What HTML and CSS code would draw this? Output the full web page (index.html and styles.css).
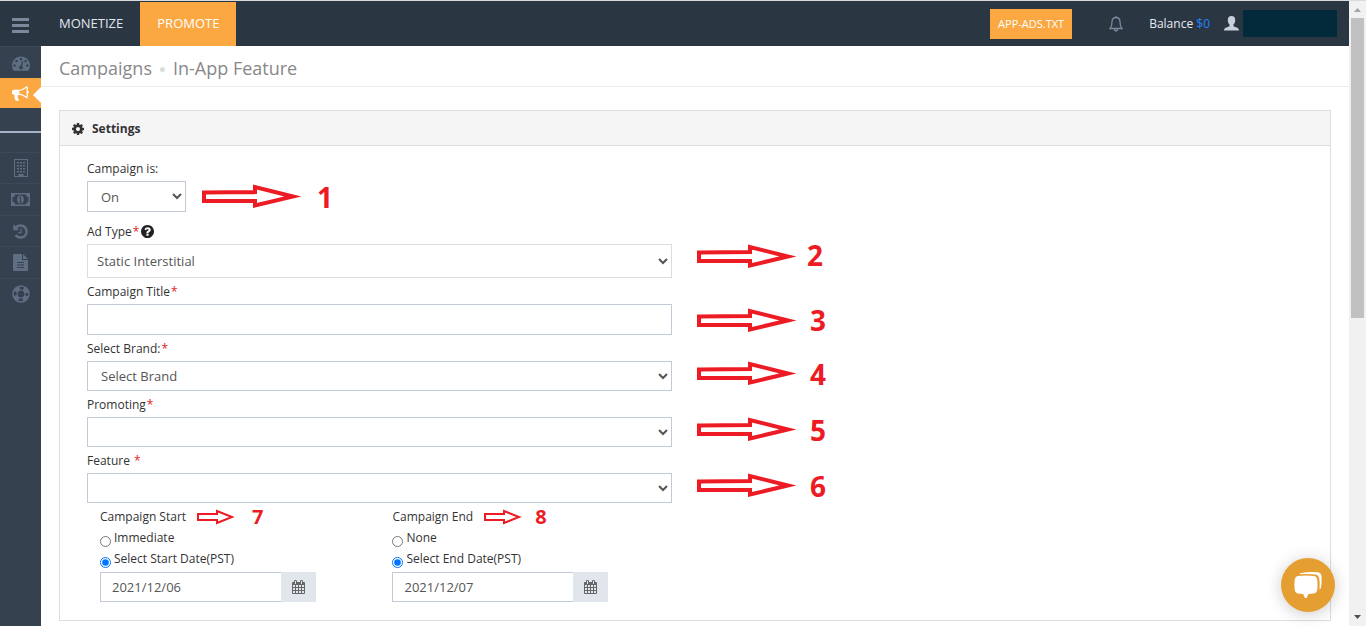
FILE: index.html
```html
<!DOCTYPE html>
<html lang="en">
<head>
<meta charset="utf-8">
<title>Campaigns - In-App Feature</title>
<link rel="stylesheet" href="styles.css">
</head>
<body>
<svg class="sprite" aria-hidden="true">
  <symbol id="arrow-long" viewBox="0 0 100 24"><path fill="#fff" stroke="#ed1c24" stroke-width="4" stroke-miterlimit="10" d="M2 8.500L53 8V3L91 12.500L53 21.500V17H2Z"/></symbol>
  <symbol id="arrow-short" viewBox="0 0 39 16"><path fill="#fff" stroke="#ed1c24" stroke-width="2" stroke-miterlimit="10" d="M1 5H20V2L35 8L20 14V11H1Z"/></symbol>
  <symbol id="calendar" viewBox="0 0 13 14"><path fill="#666" fill-rule="evenodd" d="M1 2H2V1Q2 0 3.500 0T5 1V2H8V1Q8 0 9.500 0T11 1V2H12Q13 2 13 3V13Q13 14 12 14H1Q0 14 0 13V3Q0 2 1 2ZM3 1V4H4V1ZM9 1V4H10V1ZM1 5V7H3V5ZM4 5V7H6V5ZM7 5V7H9V5ZM10 5V7H12V5ZM1 8V10H3V8ZM4 8V10H6V8ZM7 8V10H9V8ZM10 8V10H12V8ZM1 11V13H3V11ZM4 11V13H6V11ZM7 11V13H9V11ZM10 11V13H12V11Z"/></symbol>
</svg>
<div class="app">
  <div class="shell">
    <header class="topbar">
      <button class="menu-toggle" aria-label="Toggle menu"><span></span><span></span><span></span></button>
      <nav class="tabs">
        <a class="tab" href="#">MONETIZE</a>
        <a class="tab tab-active" href="#">PROMOTE</a>
      </nav>
      <div class="account">
        <a class="ads-button" href="#">APP-ADS.TXT</a>
        <button class="bell" aria-label="Notifications"><svg width="14" height="16" viewBox="0 0 14 16" fill="none" stroke="#7a899e" stroke-width="1.300"><path d="M7 0V1M1 12.500Q3 10.500 3 6Q3 1.500 7 1.500T11 6Q11 10.500 13 12.500ZM5.500 13Q5.500 15 7 15T8.500 13"/></svg></button>
        <span class="balance">Balance <a href="#">$0</a></span>
        <a class="user" href="#" aria-label="Account"><svg width="15" height="15" viewBox="0 0 15 15" fill="#c6cfda"><path d="M7.500 0C10 0 11.200 1.600 11.200 4C11.200 6 10.500 7.500 9.500 8.600V10C10 11.200 15 11 15 14.500H0C0 11 5 11.200 5.500 10V8.600C4.500 7.500 3.800 6 3.800 4C3.800 1.600 5 0 7.500 0Z"/></svg><span class="user-name"></span></a>
      </div>
    </header>
    <div class="body">
      <nav class="sidebar">
        <a class="side-item side-first" href="#" aria-label="Dashboard"><svg width="18" height="18" viewBox="0 0 1792 1792"><path d="M384 1152q0-53-37.500-90.500t-90.500-37.500-90.500 37.500-37.500 90.500 37.500 90.500 90.500 37.500 90.500-37.500 37.500-90.500zm192-448q0-53-37.500-90.500t-90.500-37.500-90.500 37.500-37.500 90.500 37.500 90.500 90.500 37.500 90.500-37.500 37.500-90.500zm428 481l101-382q6-26-7.500-48.500t-38.500-29.500-48 6.500-30 39.500l-101 382q-60 5-107 43.500t-63 98.500q-20 77 20 146t117 89 146-20 89-117q16-60-6-117t-72-91zm660-33q0-53-37.500-90.500t-90.500-37.500-90.500 37.500-37.500 90.500 37.500 90.500 90.500 37.500 90.500-37.500 37.500-90.500zm-640-640q0-53-37.500-90.500t-90.500-37.500-90.500 37.500-37.500 90.500 37.500 90.500 90.500 37.500 90.500-37.500 37.500-90.500zm448 192q0-53-37.500-90.500t-90.500-37.500-90.500 37.500-37.500 90.500 37.500 90.500 90.500 37.500 90.500-37.500 37.500-90.500zm320 448q0 261-141 483-19 29-54 29h-1402q-35 0-54-29-141-221-141-483 0-182 71-348t191-286 286-191 348-71 348 71 286 191 191 286 71 348z"/></svg></a>
        <a class="side-item side-active" href="#" aria-label="Campaigns"><svg width="17" height="17" viewBox="0 0 1792 1792"><path d="M1664 640q53 0 90.500 37.500t37.500 90.500-37.500 90.500-90.500 37.500v384q0 52-38 90t-90 38q-417-347-812-380-58 19-91 66t-31 100.500 40 92.500q-20 33-23 65.500t6 58 33.500 55 48 50 61.500 50.500q-29 58-111.500 83t-168.500 11.500-132-55.500q-7-23-29.500-87.500t-32-94.500-23-89-15-101 3.500-98.500 22-110.500h-122q-66 0-113-47t-47-113v-192q0-66 47-113t113-47h480q435 0 896-384 52 0 90 38t38 90v384zm-128 604v-954q-394 302-768 343v270q377 42 768 341z"/></svg></a>
        <div class="side-divider"></div>
        <div class="side-group">
          <a class="side-item" href="#" aria-label="Company"><svg width="14" height="18" viewBox="0 0 14 18"><path fill-rule="evenodd" d="M0 0H14V18H0ZM1 1V17H4.500V15H9.500V17H13V1Z"/><path d="M3 3h2v1.500H3zM6 3h2v1.500H6zM9 3h2v1.500H9zM3 6h2v1.500H3zM6 6h2v1.500H6zM9 6h2v1.500H9zM3 9h2v1.500H3zM6 9h2v1.500H6zM9 9h2v1.500H9zM3 12h2v1.500H3zM6 12h2v1.500H6zM9 12h2v1.500H9z"/></svg></a>
          <a class="side-item" href="#" aria-label="Payments"><svg width="19" height="13" viewBox="0 0 19 13"><path fill-rule="evenodd" d="M0 0H19V13H0ZM4 1.500Q4 4 1.500 4V9Q4 9 4 11.500H15Q15 9 17.500 9V4Q15 4 15 1.500Z"/><ellipse cx="9.500" cy="6.500" rx="3.300" ry="4"/><path class="side-cut" d="M9.500 4V9M8 5L9.500 4M8 9H11"/></svg></a>
          <a class="side-item" href="#" aria-label="History"><svg width="17" height="17" viewBox="0 0 1792 1792"><path d="M1664 896q0 156-61 298t-164 245-245 164-298 61q-172 0-327-72.500t-264-204.500q-7-10-6.500-22.500t8.500-20.500l137-138q10-9 25-9 16 2 23 12 73 95 179 147t225 52q104 0 198.500-40.500t163.500-109.500 109.500-163.500 40.500-198.500-40.500-198.500-109.500-163.500-163.500-109.500-198.500-40.500q-98 0-188 35.500t-160 101.500l137 138q31 30 14 69-17 40-59 40h-448q-26 0-45-19t-19-45v-448q0-42 40-59 39-17 69 14l130 129q107-101 244.500-156.500t284.500-55.500q156 0 298 61t245 164 164 245 61 298zm-640-288v448q0 14-9 23t-23 9h-320q-14 0-23-9t-9-23v-64q0-14 9-23t23-9h224v-352q0-14 9-23t23-9h64q14 0 23 9t9 23z"/></svg></a>
          <a class="side-item" href="#" aria-label="Reports"><svg width="15" height="17" viewBox="0 0 15 17"><path fill-rule="evenodd" d="M1 0H9V6H15V16Q15 17 14 17H1Q0 17 0 16V1Q0 0 1 0ZM10 0L15 5H10ZM4 8V9H11V8ZM4 10.500V11.500H11V10.500ZM4 13V14H11V13Z"/></svg></a>
          <a class="side-item" href="#" aria-label="Support"><svg width="18" height="18" viewBox="0 0 18 18"><circle cx="9" cy="9" r="6" fill="none" stroke="#5f6e83" stroke-width="4" stroke-dasharray="5.400 4.025" stroke-dashoffset="7.410"/><circle cx="9" cy="9" r="8" fill="none" stroke="#5f6e83" stroke-width="1.500"/><circle cx="9" cy="9" r="4" fill="none" stroke="#5f6e83" stroke-width="1.200"/></svg></a>
        </div>
      </nav>
      <main class="main">
        <h1 class="page-title"><span>Campaigns</span><span class="dot"></span><span>In-App Feature</span></h1>
        <section class="panel">
          <h2 class="panel-head"><svg width="12" height="12" viewBox="128 128 1536 1536" fill="#333"><path d="M1152 896q0-106-75-181t-181-75-181 75-75 181 75 181 181 75 181-75 75-181zm512-109v222q0 12-8 23t-20 13l-185 28q-19 54-39 91 35 50 107 138 10 12 10 25t-9 23q-27 37-99 108t-94 71q-12 0-26-9l-138-108q-44 23-91 38-16 136-29 186-7 28-36 28h-222q-14 0-24.500-8.500t-11.500-21.500l-28-184q-49-16-90-37l-141 107q-10 9-25 9-14 0-25-11-126-114-165-168-7-10-7-23 0-12 8-23 15-21 51-66.500t54-70.500q-27-50-41-99l-183-27q-13-2-21-12.500t-8-23.500v-222q0-12 8-23t19-13l186-28q14-46 39-92-40-57-107-138-10-12-10-24 0-10 9-23 26-36 98.500-107.500t94.500-71.500q13 0 26 10l138 107q44-23 91-38 16-136 29-186 7-28 36-28h222q14 0 24.500 8.500t11.500 21.500l28 184q49 16 90 37l142-107q9-9 24-9 13 0 25 10 129 119 165 170 7 8 7 22 0 12-8 23-15 21-51 66.500t-54 70.500q26 50 41 98l183 28q13 2 21 12.500t8 23.500z"/></svg>Settings</h2>
          <form class="form">
            <label class="label" for="status">Campaign is:</label>
            <div class="row row-status">
              <select class="control control-small" id="status"><option>On</option><option>Off</option></select>
              <div class="note"><svg class="arrow"><use href="#arrow-long"/></svg><span class="num">1</span></div>
            </div>
            <label class="label" for="adtype">Ad Type<span class="req">*</span><svg class="help" width="13" height="13" viewBox="128 128 1536 1536" fill="#222"><path d="M1024 1376v-192q0-14-9-23t-23-9h-192q-14 0-23 9t-9 23v192q0 14 9 23t23 9h192q14 0 23-9t9-23zm256-672q0-88-55.500-163t-138.500-116-170-41q-243 0-371 213-15 24 8 42l132 100q7 6 19 6 16 0 25-12 53-68 86-92 34-24 86-24 48 0 85.500 26t37.500 59q0 38-20 61t-68 45q-63 28-115.500 86.500t-52.500 125.500v36q0 14 9 23t23 9h192q14 0 23-9t9-23q0-19 21.500-49.500t54.500-49.500q32-18 49-28.500t46-35 44.500-48 28-60.500 12.500-81zm384 192q0 209-103 385.500t-279.500 279.500-385.500 103-385.500-103-279.500-279.500-103-385.500 103-385.500 279.500-279.500 385.500-103 385.500 103 279.500 279.500 103 385.500z"/></svg></label>
            <div class="row">
              <select class="control control-tall" id="adtype"><option>Static Interstitial</option></select>
              <div class="note note-high"><svg class="arrow"><use href="#arrow-long"/></svg><span class="num">2</span></div>
            </div>
            <label class="label" for="title">Campaign Title<span class="req">*</span></label>
            <div class="row row-text">
              <input class="control control-text" id="title" type="text">
              <div class="note"><svg class="arrow"><use href="#arrow-long"/></svg><span class="num">3</span></div>
            </div>
            <label class="label" for="brand">Select Brand:<span class="req">*</span></label>
            <div class="row">
              <select class="control" id="brand"><option>Select Brand</option></select>
              <div class="note"><svg class="arrow"><use href="#arrow-long"/></svg><span class="num">4</span></div>
            </div>
            <label class="label" for="promoting">Promoting<span class="req">*</span></label>
            <div class="row">
              <select class="control" id="promoting"><option></option></select>
              <div class="note"><svg class="arrow"><use href="#arrow-long"/></svg><span class="num">5</span></div>
            </div>
            <label class="label" for="feature">Feature <span class="req">*</span></label>
            <div class="row">
              <select class="control" id="feature"><option></option></select>
              <div class="note"><svg class="arrow"><use href="#arrow-long"/></svg><span class="num">6</span></div>
            </div>
            <div class="dates">
              <div class="date">
                <div class="date-head"><span>Campaign Start</span><svg class="arrow-small"><use href="#arrow-short"/></svg><span class="num-small">7</span></div>
                <label class="choice"><input type="radio" name="start"><span>Immediate</span></label>
                <label class="choice"><input type="radio" name="start" checked><span>Select Start Date(PST)</span></label>
                <div class="date-group"><input class="date-input" type="text" value="2021/12/06" aria-label="Start date"><button class="date-button" type="button" aria-label="Pick start date"><svg width="13" height="14"><use href="#calendar"/></svg></button></div>
              </div>
              <div class="date date-end">
                <div class="date-head"><span>Campaign End</span><svg class="arrow-small"><use href="#arrow-short"/></svg><span class="num-small">8</span></div>
                <label class="choice"><input type="radio" name="end"><span>None</span></label>
                <label class="choice"><input type="radio" name="end" checked><span>Select End Date(PST)</span></label>
                <div class="date-group"><input class="date-input" type="text" value="2021/12/07" aria-label="End date"><button class="date-button" type="button" aria-label="Pick end date"><svg width="13" height="14"><use href="#calendar"/></svg></button></div>
              </div>
            </div>
          </form>
        </section>
      </main>
    </div>
  </div>
  <div class="scrollbar" aria-hidden="true">
    <svg width="17" height="17" viewBox="0 0 17 17"><path fill="#a3a3a3" d="M5 11L8.500 7L12 11Z"/></svg>
    <div class="thumb"></div>
    <svg class="scroll-down" width="17" height="17" viewBox="0 0 17 17"><path fill="#505050" d="M5 6L8.500 10L12 6Z"/></svg>
  </div>
</div>
<button class="chat" aria-label="Open chat"><svg width="28" height="28" viewBox="0 0 28 28" fill="#fff"><path d="M4 5Q12 4.200 20 5Q23 5.500 23.300 9Q23.800 14 23.300 18.500Q23 22 20 22.500L14.500 23L12.500 27L11 27L9 23L4 22.500Q1 22 .7 18.500Q0 14 .7 9Q1 5.500 4 5Z"/><path d="M6 2.200Q15 .3 24 1.300Q27 1.800 27.500 5Q28 11 27 17L25.500 18.500Q26 13 25.300 8Q24.800 4 21.500 3.500Q15 2.800 6 3.200Z"/></svg></button>
</body>
</html>
```
FILE: styles.css
```css
* { box-sizing: border-box; }
body { margin: 0; background: #fff; color: #333; font: 12px/18px "Open Sans", sans-serif; }
a { text-decoration: none; }
button { border: 0; padding: 0; background: none; font: inherit; cursor: pointer; }
svg { display: block; flex: none; }
.sprite { position: absolute; width: 0; height: 0; }

.app { display: flex; height: 100vh; overflow: hidden; border-top: 1px solid #dadada; }
.shell { flex: 1; min-width: 0; display: flex; flex-direction: column; }

.topbar { flex: none; display: flex; align-items: center; height: 45px; background: #2b3643; }
.menu-toggle { display: flex; flex-direction: column; gap: 3px; width: 41px; padding: 3px 12px 0; }
.menu-toggle span { height: 3px; background: #7b899c; }
.tabs { display: flex; align-self: stretch; padding-top: 1px; }
.tab { padding: 0 17px; color: #e1e6ee; font-size: 13px; line-height: 42px; }
.tab:first-child { padding-left: 18px; }
.tab-active { background: #fba843; color: #fff; }
.account { display: flex; align-items: center; margin-left: auto; padding-right: 12px; }
.ads-button { padding: 0 8px; background: #fba843; color: #fff; font-size: 11px; line-height: 30px; }
.bell { margin: 0 26px 0 37px; }
.balance { color: #e6eaf0; }
.balance a { color: #1b85ff; }
.user { display: flex; align-items: center; gap: 4px; margin-left: 14px; }
.user-name { width: 94px; height: 27px; background: #022a3a; }

.body { flex: 1; min-height: 0; display: flex; }
.sidebar { flex: none; width: 41px; background: #364150; }
.side-item { display: flex; align-items: center; justify-content: center; color: #5f6e83; fill: currentColor; }
.side-first { height: 32px; border-top: 1px solid #3d4957; }
.side-active { position: relative; height: 30px; background: #fba843; color: #fff; }
.side-active::after { content: ""; position: absolute; right: 0; top: 9px; border: 8px solid transparent; border-left: 0; border-right-color: #fff; }
.side-divider { height: 44px; background: linear-gradient(#a5b3c8, #a5b3c8) 0 23px / 100% 2px no-repeat; }
.side-group { display: flex; flex-direction: column; height: 157px; }
.side-group .side-item { flex: 1; border-top: 1px solid #3d4957; }
.side-cut { fill: none; stroke: #364150; }

.main { flex: 1; min-width: 0; }
.page-title { display: flex; align-items: center; height: 41px; margin: 0; padding: 4px 18px 0; border-bottom: 1px solid #e7ecf1; color: #888; font-size: 18px; line-height: 28px; font-weight: 400; }
.dot { width: 5px; height: 5px; margin: 3px 8px 0; border-radius: 50%; background: #ddd; }
.panel { margin: 23px 18px 0; border: 1px solid #ddd; }
.panel-head { display: flex; align-items: center; gap: 8px; height: 35px; margin: 0; padding: 2px 0 0 12px; border-bottom: 1px solid #ddd; background: #f5f5f5; font-size: 12px; line-height: 18px; }
.form { padding: 9px 27px 18px; }
.label { display: flex; align-items: center; width: max-content; height: 26px; padding-top: 2px; white-space: pre; }
.req { margin-left: 1px; color: #e02222; }
.help { margin: 0 0 2px 2px; }
.row { display: flex; align-items: flex-start; }
.row-status { margin-bottom: 6px; }
.row-status, .row-text { align-items: center; }
.control { flex: none; width: 48.1%; height: 30px; padding: 0 9px; border: 1px solid #c2cad8; border-radius: 0; background: #fff; color: #555; font: 13px/18px "Open Sans", sans-serif; }
.control-small { width: 99px; height: 31px; }
.control-tall { height: 34px; padding: 0 5px; border-color: #ddd; }
.control-text { height: 31px; }
.note { display: flex; margin-left: 25px; color: #ed1c24; }
.row-status .note { margin-left: 16px; }
.arrow { width: 100px; height: 24px; }
.num { margin-left: 13px; font-size: 28px; line-height: 26px; font-weight: 700; }
.note-high .num { margin-left: 10px; line-height: 22px; }
.row-status .num { margin-left: 15px; }
.row-text .num { line-height: 24px; }
.dates { display: flex; width: 48.1%; }
.date { flex: 1; padding-left: 13px; }
.date-head { display: flex; align-items: center; height: 26px; padding-top: 1px; }
.arrow-small { width: 39px; height: 16px; margin-left: 11px; }
.num-small { margin-left: 16px; color: #ed1c24; font-size: 20px; line-height: 20px; font-weight: 700; }
.date-end .num-small { margin-left: 12px; }
.choice { display: flex; width: max-content; height: 21px; gap: 3px; }
.choice input { width: 11px; height: 11px; margin: 7px 0 0; }
.date-group { display: flex; max-width: 216px; margin-top: 1px; }
.date-input { flex: 1; min-width: 0; height: 30px; padding: 0 11px; border: 1px solid #c2cad8; border-right: 0; color: #555; font: 13px/18px "Open Sans", sans-serif; }
.date-button { display: flex; align-items: center; justify-content: center; width: 35px; background: #e1e5ec; }

.scrollbar { flex: none; display: flex; flex-direction: column; align-items: center; width: 17px; background: #f1f1f1; }
.thumb { width: 13px; height: 48%; background: #c1c1c1; }
.scroll-down { margin-top: auto; }
.chat { position: fixed; right: 31px; bottom: 14px; display: flex; align-items: center; justify-content: center; width: 54px; height: 54px; border-radius: 50%; background: #e59e31; box-shadow: 0 2px 16px rgba(0, 0, 0, .2); }
```
